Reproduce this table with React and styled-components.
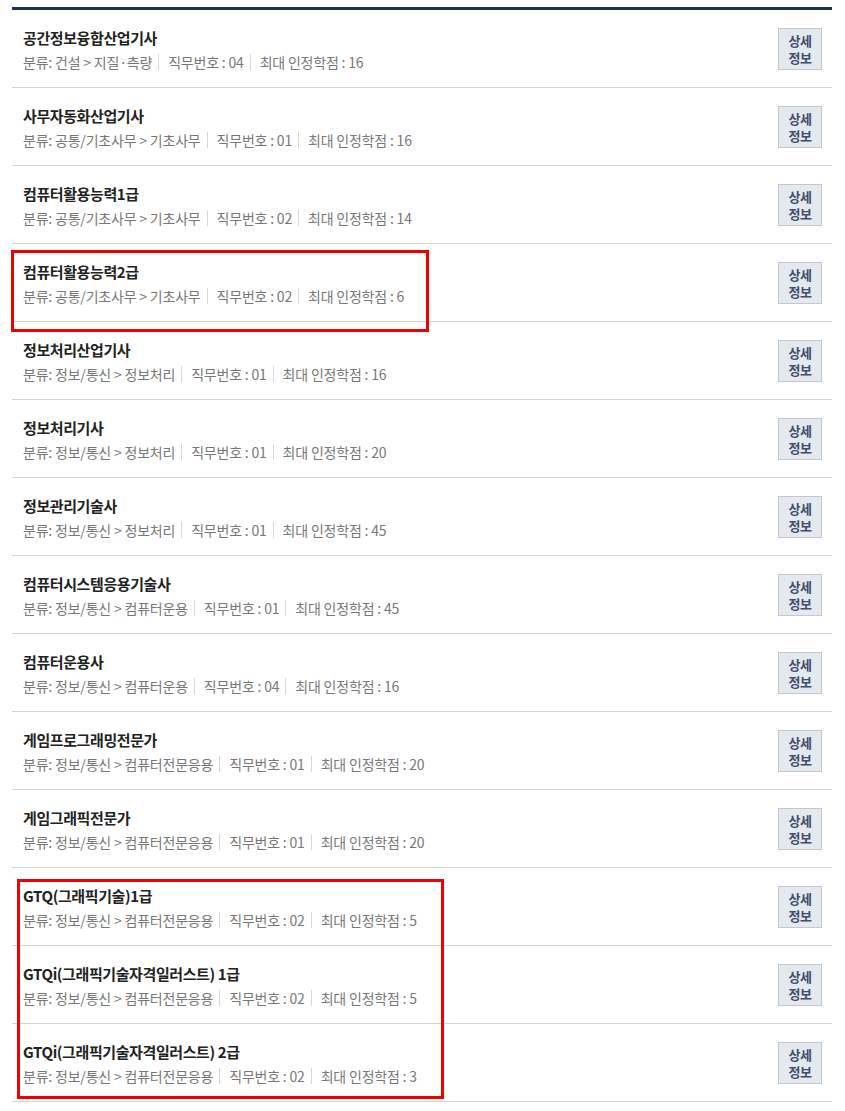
import React from "react";
import styled, { createGlobalStyle } from "styled-components";

const Global = createGlobalStyle`
  html, body { margin: 0; padding: 0; background: #fff; }
  body { font-family: "Noto Sans CJK KR", "Noto Sans", sans-serif; }
`;

const List = styled.div`
  position: relative;
  margin: 7px 13px 0 12px;
  border-top: 3px solid #1b3358;
`;

const Row = styled.div`
  display: flex;
  align-items: center;
  justify-content: space-between;
  height: 77px;
  border-bottom: 1px solid #d4d4d4;
  padding: 0 10px 0 11px;
`;

const Info = styled.div`
  display: flex;
  flex-direction: column;
  gap: 4px;
  padding-top: 3px;
`;

const Title = styled.div`
  font-size: 15px;
  font-weight: 700;
  color: #222;
  line-height: 20px;
  letter-spacing: -0.4px;
`;

const Meta = styled.div`
  display: flex;
  align-items: center;
  font-size: 14px;
  color: #777;
  line-height: 20px;
  letter-spacing: -0.2px;
`;

const Sep = styled.span`
  display: inline-block;
  width: 1px;
  height: 16px;
  background: #d6d6d6;
  margin: 0 9px 0 6px;
`;

const DetailButton = styled.button`
  width: 44px;
  height: 42px;
  padding: 0;
  background: #e4e8ef;
  border: 1px solid #c3c8d0;
  color: #3f4f68;
  font-family: inherit;
  font-size: 13px;
  font-weight: 700;
  line-height: 17px;
  letter-spacing: -0.5px;
  cursor: pointer;
`;

const Highlight = styled.div`
  position: absolute;
  left: ${(p) => p.$left}px;
  top: ${(p) => p.$top}px;
  width: ${(p) => p.$width}px;
  height: ${(p) => p.$height}px;
  border: 3px solid #f00000;
  box-sizing: border-box;
  pointer-events: none;
`;

const items = [
  ["공간정보융합산업기사", "건설 > 지질·측량", "04", "16"],
  ["사무자동화산업기사", "공통/기초사무 > 기초사무", "01", "16"],
  ["컴퓨터활용능력1급", "공통/기초사무 > 기초사무", "02", "14"],
  ["컴퓨터활용능력2급", "공통/기초사무 > 기초사무", "02", "6"],
  ["정보처리산업기사", "정보/통신 > 정보처리", "01", "16"],
  ["정보처리기사", "정보/통신 > 정보처리", "01", "20"],
  ["정보관리기술사", "정보/통신 > 정보처리", "01", "45"],
  ["컴퓨터시스템응용기술사", "정보/통신 > 컴퓨터운용", "01", "45"],
  ["컴퓨터운용사", "정보/통신 > 컴퓨터운용", "04", "16"],
  ["게임프로그래밍전문가", "정보/통신 > 컴퓨터전문응용", "01", "20"],
  ["게임그래픽전문가", "정보/통신 > 컴퓨터전문응용", "01", "20"],
  ["GTQ(그래픽기술)1급", "정보/통신 > 컴퓨터전문응용", "02", "5"],
  ["GTQi(그래픽기술자격일러스트) 1급", "정보/통신 > 컴퓨터전문응용", "02", "5"],
  ["GTQi(그래픽기술자격일러스트) 2급", "정보/통신 > 컴퓨터전문응용", "02", "3"],
];

export default function App() {
  return (
    <>
      <Global />
      <List>
        {items.map(([title, cat, no, credit]) => (
          <Row key={title}>
            <Info>
              <Title>{title}</Title>
              <Meta>
                <span>분류: {cat}</span>
                <Sep />
                <span>직무번호 : {no}</span>
                <Sep />
                <span>최대 인정학점 : {credit}</span>
              </Meta>
            </Info>
            <DetailButton>
              상세
              <br />
              정보
            </DetailButton>
          </Row>
        ))}
        <Highlight $left={-1} $top={240} $width={418} $height={82} />
        <Highlight $left={5} $top={869} $width={427} $height={220} />
      </List>
    </>
  );
}
